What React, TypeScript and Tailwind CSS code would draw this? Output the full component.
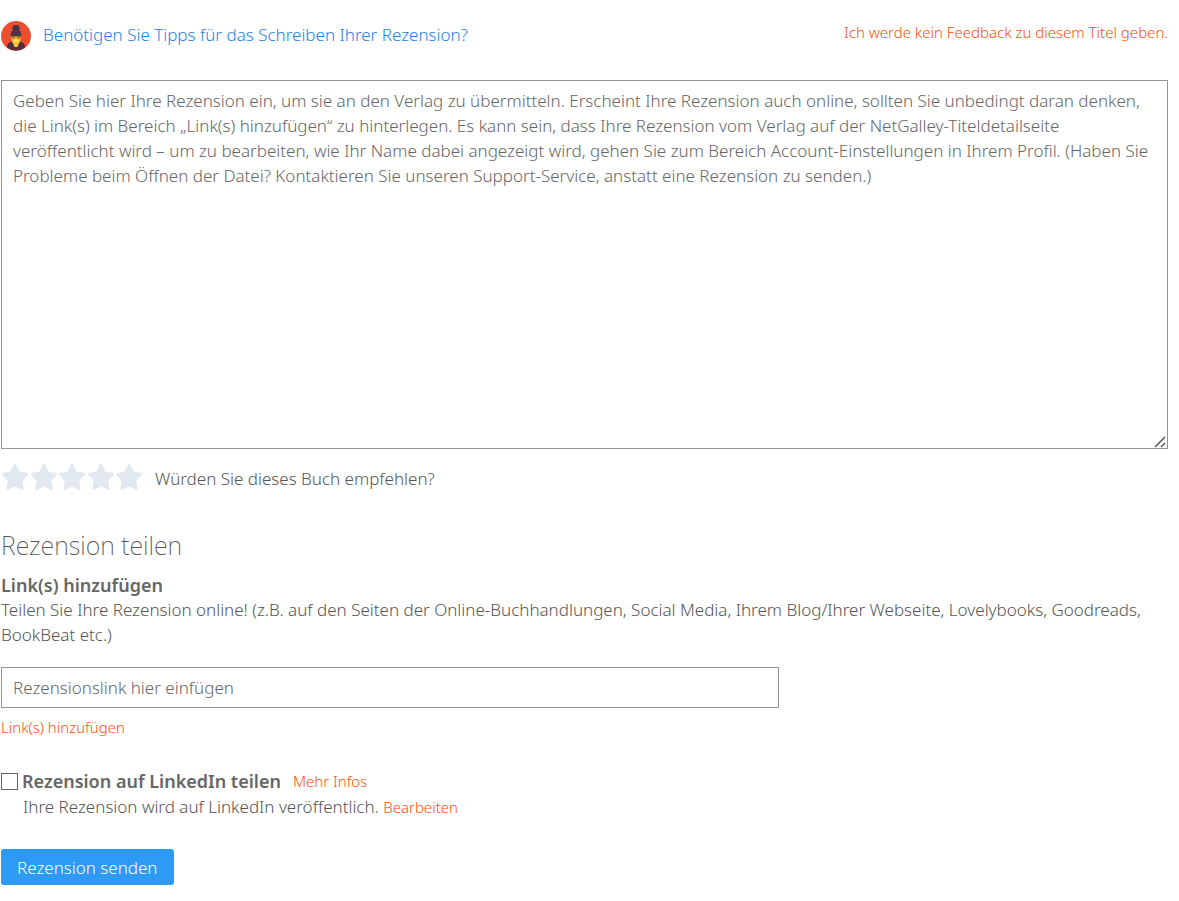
import { useState } from "react";
import { FaStar } from "react-icons/fa6";

const stars = [1, 2, 3, 4, 5];

const reviewPlaceholder =
  "Geben Sie hier Ihre Rezension ein, um sie an den Verlag zu übermitteln. Erscheint Ihre Rezension auch online, sollten Sie unbedingt daran denken, die Link(s) im Bereich „Link(s) hinzufügen“ zu hinterlegen. Es kann sein, dass Ihre Rezension vom Verlag auf der NetGalley-Titeldetailseite veröffentlicht wird – um zu bearbeiten, wie Ihr Name dabei angezeigt wird, gehen Sie zum Bereich Account-Einstellungen in Ihrem Profil. (Haben Sie Probleme beim Öffnen der Datei? Kontaktieren Sie unseren Support-Service, anstatt eine Rezension zu senden.)";

function TipsAvatar() {
  return (
    <svg viewBox="0 0 30 30" className="size-[30px] shrink-0" aria-hidden="true">
      <circle cx="15" cy="15" r="15" fill="#ec4f2f" />
      <path d="M6 26.500c0-4 3-6 6-6.500h6c3 .5 6 2.500 6 6.500a15 15 0 0 1-18 0z" fill="#54303f" />
      <path d="M10.500 13h9v6.500c0 2-2 3.500-4.500 3.500s-4.500-1.500-4.500-3.500z" fill="#f9b92c" />
      <path d="M12 22h6l-1.500 4h-3z" fill="#fbc93f" />
      <path d="M12.500 18.500h5v2.500h-5z" fill="#fde06a" />
      <rect x="11.500" y="4" width="7" height="6" rx="2.500" fill="#4a3344" />
      <path d="M9.500 15c0-4 1.500-6.500 5.500-6.500s5.500 2.500 5.500 6.500l-1.500 0.500h-8z" fill="#4a3344" />
      <path d="M11 16h3v1.500h-3zM16 16h3v1.500h-3z" fill="#a8652c" />
    </svg>
  );
}

function StarRating() {
  const [rating, setRating] = useState(0);

  return (
    <div className="flex w-[142px] justify-between" role="group" aria-label="Bewertung">
      {stars.map((star) => (
        <button
          key={star}
          type="button"
          aria-label={`${star} von 5 Sternen`}
          onClick={() => setRating(star)}
          className={star <= rating ? "text-amber-400" : "text-[#e1e8f0]"}
        >
          <FaStar className="h-[26px] w-7" preserveAspectRatio="none" />
        </button>
      ))}
    </div>
  );
}

export default function App() {
  return (
    <form
      className="pr-[11px] pl-px pt-5 pb-4 font-['Noto_Sans',sans-serif] text-[17px] leading-[25px] font-light text-[#555]"
      onSubmit={(e) => e.preventDefault()}
    >
      <div className="flex items-start justify-between">
        <a href="#tipps" className="flex items-center gap-3 pt-px text-[#2483e2]">
          <TipsAvatar />
          <span className="pb-1">Benötigen Sie Tipps für das Schreiben Ihrer Rezension?</span>
        </a>
        <a href="#kein-feedback" className="text-[15px] text-[#ff4d0a]">
          Ich werde kein Feedback zu diesem Titel geben.
        </a>
      </div>

      <div className="relative mt-[29px]">
        <textarea
          aria-label="Rezension"
          placeholder={reviewPlaceholder}
          className="block h-[369px] w-full resize-y border border-[#949494] px-[11px] py-[7px] placeholder:text-[#666] [&::-webkit-resizer]:bg-transparent"
        />
        <svg
          viewBox="0 0 12 12"
          className="pointer-events-none absolute right-[2px] bottom-px size-3"
          fill="none"
          stroke="#555"
          strokeWidth="1.500"
          aria-hidden="true"
        >
          <path d="M1 11 11 1M7 11l4-4" />
        </svg>
      </div>

      <div className="mt-[13px] flex items-center gap-3">
        <StarRating />
        <span className="pt-1">Würden Sie dieses Buch empfehlen?</span>
      </div>

      <h2 className="mt-[38px] text-[25px] leading-8 font-extralight">Rezension teilen</h2>

      <label htmlFor="review-link" className="mt-3 block text-[18px] leading-6 font-semibold text-[#666]">
        Link(s) hinzufügen
      </label>
      <p>
        Teilen Sie Ihre Rezension online! (z.B. auf den Seiten der Online-Buchhandlungen, Social Media, Ihrem Blog/Ihrer
        Webseite, Lovelybooks, Goodreads, BookBeat etc.)
      </p>
      <input
        id="review-link"
        type="url"
        placeholder="Rezensionslink hier einfügen"
        className="mt-5 block h-[41px] w-2/3 border border-[#949494] px-[11px] placeholder:text-[#666]"
      />
      <a href="#link" className="mt-[7px] inline-block text-[15px] text-[#ff4d0a]">
        Link(s) hinzufügen
      </a>

      <div className="mt-[29px] flex items-center">
        <input
          id="share-linkedin"
          type="checkbox"
          className="size-[17px] appearance-none border border-[#666] bg-white checked:bg-[#2d9af4]"
        />
        <label htmlFor="share-linkedin" className="ml-1 text-[18px] font-semibold text-[#666]">
          Rezension auf LinkedIn teilen
        </label>
        <a href="#infos" className="ml-3 text-[15px] text-[#ff4d0a]">
          Mehr Infos
        </a>
      </div>
      <p className="ml-[22px]">
        Ihre Rezension wird auf LinkedIn veröffentlich.{" "}
        <a href="#bearbeiten" className="text-[15px] text-[#ff4d0a]">
          Bearbeiten
        </a>
      </p>

      <button type="submit" className="mt-[29px] h-9 rounded-[3px] bg-[#2d9af4] px-4 text-white">
        Rezension senden
      </button>
    </form>
  );
}
